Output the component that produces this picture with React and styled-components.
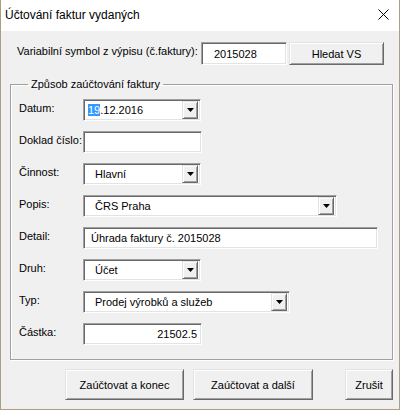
import React from "react";
import styled, { createGlobalStyle } from "styled-components";

const GlobalStyle = createGlobalStyle`
  html, body {
    margin: 0;
    padding: 0;
    background: #f0f0f0;
  }
`;

const FONT = `"Liberation Sans", Arial, sans-serif`;

const Window = styled.div`
  width: 400px;
  height: 410px;
  box-sizing: border-box;
  border: 1px solid #aa9f84;
  border-top: none;
  display: flex;
  flex-direction: column;
  font-family: ${FONT};
  font-size: 11px;
  color: #000;
  background: #f0f0f0;
`;

const TitleBar = styled.div`
  height: 31px;
  flex-shrink: 0;
  background: #fff;
  display: flex;
  align-items: center;
  justify-content: space-between;
  padding: 0 10px 0 4px;
  box-sizing: border-box;
`;

const Title = styled.span`
  font-size: 12px;
  margin-top: -2px;
`;

const CloseIcon = () => (
  <svg width="11" height="11" viewBox="0 0 11 11" style={{ marginTop: -2 }}>
    <path d="M0.5 0.5 L10.5 10.5 M10.5 0.5 L0.5 10.5" stroke="#000" strokeWidth="1" />
  </svg>
);

const Body = styled.div`
  flex: 1;
  padding: 11px 0 0 9px;
  display: flex;
  flex-direction: column;
`;

const TopRow = styled.div`
  display: flex;
  align-items: flex-start;
  padding-left: 7px;
  height: 23px;
`;

const TopLabel = styled.span`
  width: 184px;
  margin-top: 3px;
`;

const sunken = `
  box-sizing: border-box;
  background: #fff;
  border-top: 1px solid #a0a0a0;
  border-left: 1px solid #a0a0a0;
  border-right: 1px solid #fff;
  border-bottom: 1px solid #fff;
  box-shadow: inset 1px 1px 0 #696969, inset -1px -1px 0 #e3e3e3;
`;

const raised = `
  box-sizing: border-box;
  background: #f0f0f0;
  border-top: 1px solid #e3e3e3;
  border-left: 1px solid #e3e3e3;
  border-right: 1px solid #696969;
  border-bottom: 1px solid #696969;
  box-shadow: inset 1px 1px 0 #fff, inset -1px -1px 0 #a0a0a0;
`;

const TextBox = styled.div`
  ${sunken}
  width: ${(p) => p.$w}px;
  height: ${(p) => p.$h || 22}px;
  display: flex;
  align-items: center;
  justify-content: ${(p) => (p.$right ? "flex-end" : "flex-start")};
  padding: 0 ${(p) => (p.$right ? 4 : 0)}px 0 ${(p) => p.$pad || 0}px;
  white-space: nowrap;
`;

const Button = styled.button`
  ${raised}
  font-family: ${FONT};
  font-size: 11px;
  color: #000;
  width: ${(p) => p.$w}px;
  height: ${(p) => p.$h || 31}px;
  margin-left: ${(p) => p.$ml || 0}px;
  padding: 0;
  cursor: default;
`;

const Frame = styled.fieldset`
  margin: 13px 0 0 0;
  width: 383px;
  box-sizing: border-box;
  padding: 8px 8px 14px 8px;
  border: 1px solid #a0a0a0;
  box-shadow: inset 1px 1px 0 #fff, 1px 1px 0 #fff;
  display: flex;
  flex-direction: column;
  gap: 10px;
`;

const Legend = styled.legend`
  margin-left: 9px;
  padding: 0 3px;
  line-height: 13px;
`;

const Row = styled.div`
  display: flex;
  align-items: flex-start;
  height: 22px;
`;

const Label = styled.span`
  width: 64px;
  flex-shrink: 0;
  margin-top: 3px;
`;

const Combo = styled.div`
  ${sunken}
  width: ${(p) => p.$w}px;
  height: 22px;
  display: flex;
  align-items: center;
  padding: 2px 2px 2px ${(p) => p.$pad}px;
`;

const ComboValue = styled.span`
  flex: 1;
  white-space: nowrap;
`;

const DropButton = styled.span`
  ${raised}
  width: 16px;
  height: 18px;
  display: flex;
  align-items: center;
  justify-content: center;
`;

const Selected = styled.span`
  background: #3399ff;
  color: #fff;
`;

const ButtonRow = styled.div`
  display: flex;
  justify-content: flex-end;
  padding-right: 6px;
  margin-top: 9px;
`;

const Arrow = () => (
  <svg width="7" height="4" viewBox="0 0 7 4">
    <path d="M0 0 H7 L3.5 4 Z" fill="#000" />
  </svg>
);

const rows = [
  { label: "Datum:", kind: "combo", w: 118, pad: 4, value: <><Selected>19</Selected>.12.2016</> },
  { label: "Doklad číslo:", kind: "text", w: 119, value: "" },
  { label: "Činnost:", kind: "combo", w: 118, pad: 11, value: "Hlavní" },
  { label: "Popis:", kind: "combo", w: 254, pad: 11, value: "ČRS Praha" },
  { label: "Detail:", kind: "text", w: 295, pad: 7, value: "Úhrada faktury č. 2015028" },
  { label: "Druh:", kind: "combo", w: 118, pad: 11, value: "Účet" },
  { label: "Typ:", kind: "combo", w: 207, pad: 11, value: "Prodej výrobků a služeb" },
  { label: "Částka:", kind: "text", w: 119, right: true, value: "21502.5" },
];

const App = () => {
  return (
    <>
      <GlobalStyle />
      <Window>
        <TitleBar>
          <Title>Účtování faktur vydaných</Title>
          <CloseIcon />
        </TitleBar>
        <Body>
          <TopRow>
            <TopLabel>Variabilní symbol z výpisu (č.faktury):</TopLabel>
            <TextBox $w={86} $h={23} $pad={12}>2015028</TextBox>
            <Button $w={95} $h={23} $ml={2}>Hledat VS</Button>
          </TopRow>

          <Frame>
            <Legend>Způsob zaúčtování faktury</Legend>
            {rows.map((r) => (
              <Row key={r.label}>
                <Label>{r.label}</Label>
                {r.kind === "combo" ? (
                  <Combo $w={r.w} $pad={r.pad}>
                    <ComboValue>{r.value}</ComboValue>
                    <DropButton>
                      <Arrow />
                    </DropButton>
                  </Combo>
                ) : (
                  <TextBox $w={r.w} $pad={r.pad} $right={r.right}>
                    {r.value}
                  </TextBox>
                )}
              </Row>
            ))}
          </Frame>

          <ButtonRow>
            <Button $w={119}>Zaúčtovat a konec</Button>
            <Button $w={120} $ml={9}>Zaúčtovat a další</Button>
            <Button $w={48} $ml={32}>Zrušit</Button>
          </ButtonRow>
        </Body>
      </Window>
    </>
  );
};

export default App;
